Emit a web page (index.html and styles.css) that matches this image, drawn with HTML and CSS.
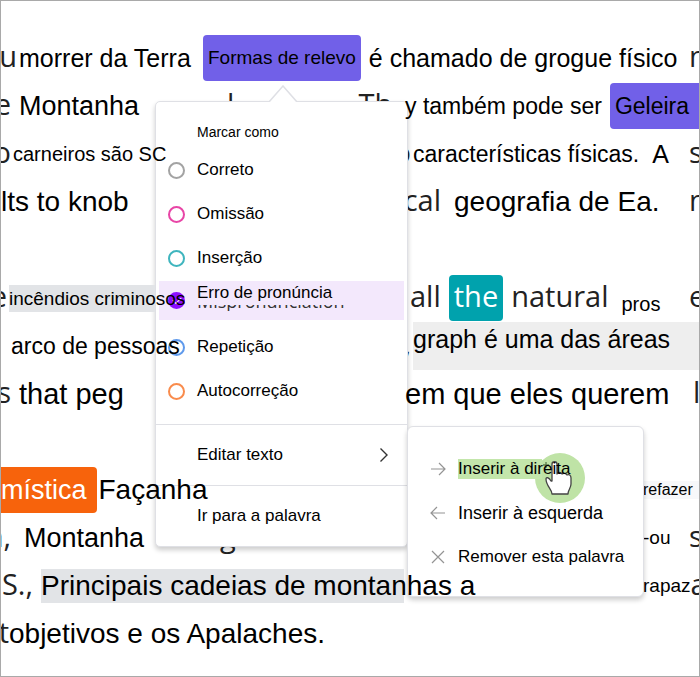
FILE: index.html
```html
<!DOCTYPE html>
<html lang="pt-BR">
<head>
  <meta charset="UTF-8" />
  <meta name="viewport" content="width=device-width, initial-scale=1.0"/>
  <title>Formas de relevo</title>
  <link rel="stylesheet" href="styles.css">
</head>
<body>
  <main class="passage">
    <div class="row">
      <div class="lead">
        <span class="edge full source">u</span>
        <span class="text-m">morrer da Terra</span>
      </div>
      <div class="anchor">
        <button class="chip mispronounced text-xs">Formas de relevo</button>

        <!-- Word menu -->
        <div class="menu">
          <svg class="caret" width="28" height="17" viewBox="0 0 28 17">
            <path d="M0 17 L14 1 L28 17" fill="#fff" stroke="#dfe0e5" stroke-width="1.5"/>
          </svg>
          <fieldset class="marks">
            <legend>Marcar como</legend>
            <label class="mark"><input type="radio" name="mark" class="gray">Correto</label>
            <label class="mark"><input type="radio" name="mark" class="pink">Omissão</label>
            <label class="mark"><input type="radio" name="mark" class="teal">Inserção</label>
            <label class="mark selected">
              <input type="radio" name="mark" class="purple" checked>
              <span class="stacked">Erro de pronúncia<span class="remnant">Mispronunciation</span></span>
            </label>
            <label class="mark"><input type="radio" name="mark" class="blue">Repetição</label>
            <label class="mark"><input type="radio" name="mark" class="orange">Autocorreção</label>
          </fieldset>
          <button class="menu-item">
            Editar texto
            <svg width="10" height="16" viewBox="0 0 10 16" fill="none" stroke="#333" stroke-width="1.4">
              <path d="M1.5 1.5 L8 8 L1.5 14.5"/>
            </svg>
          </button>
          <button class="menu-item">Ir para a palavra</button>

          <!-- Edit submenu -->
          <div class="submenu">
            <button class="sub-item">
              <svg width="16" height="16" viewBox="0 0 16 16" fill="none" stroke="#949494" stroke-width="1.2">
                <path d="M1 8 H15 M9 2 L15 8 L9 14"/>
              </svg>
              <span class="hovered">Inserir à direita</span>
            </button>
            <button class="sub-item strong">
              <svg width="16" height="16" viewBox="0 0 16 16" fill="none" stroke="#949494" stroke-width="1.2">
                <path d="M15 8 H1 M7 2 L1 8 L7 14"/>
              </svg>
              <span>Inserir à esquerda</span>
            </button>
            <button class="sub-item">
              <svg width="16" height="16" viewBox="0 0 16 16" fill="none" stroke="#949494" stroke-width="1.2">
                <path d="M2 2 L14 14 M14 2 L2 14"/>
              </svg>
              <span>Remover esta palavra</span>
            </button>
            <svg class="pointer" width="50" height="50" viewBox="0 0 50 50">
              <circle cx="25" cy="25" r="25" fill="#bfe3a6"/>
              <path d="M17 41 C17 36 11 33 11 26 C11 24 14 24 16 28 L17 28 V11 C17 8 22 8 22 11 V21 C23 19 26 19 27 21 C28 20 31 20 32 22 C34 21 36 22 36 25 V31 C36 35 33 37 33 41 Z" fill="#fff" stroke="#444" stroke-width="1.3" stroke-linejoin="round"/>
              <path d="M11 9 V15 M8 12 H14" fill="none" stroke="#5b7a4a" stroke-width="1.3"/>
            </svg>
          </div>
        </div>
      </div>
      <span class="text-m">é chamado de grogue físico</span>
      <span class="edge-right source">n</span>
    </div>

    <div class="row">
      <div class="left">
        <span class="edge source">e</span>
        <span class="text-l">Montanha</span>
        <span class="beneath far source">l</span>
        <span class="beneath farther source">Th</span>
      </div>
      <span class="text-s over">y também pode ser</span>
      <button class="chip mispronounced cut-right text-s">Geleira</button>
    </div>

    <div class="row">
      <div class="left tight">
        <span class="edge source">o</span>
        <span class="text-sm over">carneiros são SC</span>
      </div>
      <div class="right">
        <span class="edge sliver source">o</span>
        <span class="text-s">características físicas.</span>
      </div>
      <span class="text-m spaced">A</span>
      <span class="edge-right source">s</span>
    </div>

    <div class="row">
      <div class="left"><span class="text-xl">lts to knob</span></div>
      <span class="edge wide source">cal</span>
      <span class="text-xl spaced">geografia de Ea.</span>
      <span class="edge-right source">n</span>
    </div>

    <div class="row new-paragraph">
      <div class="left tight">
        <span class="edge sliver source">e</span>
        <mark class="pause short text-xs over">incêndios criminosos</mark>
      </div>
      <span class="source spaced">all</span>
      <button class="chip insertion source">the</button>
      <span class="source">natural</span>
      <span class="text-sm low spaced">pros</span>
      <span class="edge-right source">e</span>
    </div>

    <div class="row">
      <div class="left tight">
        <span class="edge narrow"></span>
        <span class="text-s over">arco de pessoas</span>
      </div>
      <div class="right">
        <span class="edge sliver source">,</span>
        <mark class="pause fill text-m">graph é uma das áreas</mark>
      </div>
    </div>

    <div class="row">
      <div class="left">
        <span class="edge source">s</span>
        <span class="text-xxl">that peg</span>
      </div>
      <span class="text-xxl over">em que eles querem</span>
      <span class="edge-right thin source">l</span>
    </div>

    <div class="row new-paragraph">
      <div class="left tight">
        <button class="chip self-correction text-l">mística</button>
        <span class="text-xl over">Façanha</span>
      </div>
      <div class="tail"><span class="redo">refazer</span></div>
    </div>

    <div class="row">
      <div class="left">
        <span class="edge source">n,</span>
        <span class="text-l spaced">Montanha</span>
        <span class="beneath near source">g</span>
      </div>
      <div class="tail">
        <span class="text-xs">-ou</span>
        <span class="edge-right source">s</span>
      </div>
    </div>

    <div class="row">
      <div class="left">
        <span class="edge medium source">S.,</span>
        <mark class="pause long text-xl over">Principais cadeias de montanhas a</mark>
      </div>
      <div class="tail over">
        <span class="text-xs">rapaz</span>
        <span class="edge-right source">a</span>
      </div>
    </div>

    <div class="row tight">
      <span class="edge narrow source">t</span>
      <span class="text-xl">objetivos e os Apalaches.</span>
    </div>
  </main>
</body>
</html>
```
FILE: styles.css
```css
* {
  box-sizing: border-box;
}

body {
  margin: 0;
  font-family: "Liberation Sans", Arial, sans-serif;
  background: #fff;
  color: #000;
}

button {
  font-family: inherit;
  color: inherit;
  border: none;
  background: none;
  padding: 0;
  cursor: pointer;
}

.passage {
  min-height: 100vh;
  border: 1px solid #a9a9a9;
  padding-top: 33px;
  overflow: hidden;
}

.row {
  display: flex;
  align-items: center;
  gap: 8px;
  height: 48px;
  white-space: nowrap;
}

.row.new-paragraph {
  margin-top: 48px;
}

.row.tight {
  gap: 0;
}

.left {
  display: flex;
  align-items: center;
  flex: none;
  gap: 8px;
  width: 396px;
  height: 48px;
}

.left.tight {
  gap: 2px;
}

.lead {
  display: flex;
  align-items: center;
  flex: none;
  gap: 2px;
  width: 194px;
}

.right {
  display: flex;
  align-items: center;
  flex: 0 1 auto;
  gap: 2px;
}

.right:last-child {
  flex: 1;
}

.tail {
  display: flex;
  align-items: center;
  width: 56px;
  margin-left: auto;
}

/* Text sizes */
.text-xs {
  font-size: 19px;
}

.text-sm {
  font-size: 20px;
}

.text-s {
  font-size: 23px;
}

.text-m {
  font-size: 25px;
}

.text-l {
  font-size: 27px;
}

.text-xl {
  font-size: 28px;
}

.text-xxl {
  font-size: 29px;
}

.source {
  padding-bottom: 5px;
  font-family: "Open Sans", "Noto Sans", sans-serif;
  font-size: 29px;
  color: #222;
}

.spaced {
  margin-left: 5px;
}

/* Letters cut off by the sides of the passage */
.edge {
  display: flex;
  justify-content: flex-end;
  flex: none;
  width: 10px;
  overflow: hidden;
}

.edge.full {
  width: 16px;
}

.edge.narrow {
  width: 8px;
}

.edge.sliver {
  width: 6px;
}

.edge.medium {
  width: 32px;
}

.edge.wide {
  width: 36px;
}

.edge-right {
  width: 10px;
  margin-left: auto;
  overflow: hidden;
}

.edge-right.thin {
  width: 6px;
}

/* Words above and below the menu */
.over {
  position: relative;
  z-index: 3;
}

.beneath.near {
  margin-left: 68px;
}

.beneath.far {
  margin-left: 80px;
}

.beneath.farther {
  margin-left: 116px;
}

.low {
  padding-top: 12px;
}

/* Marked words */
.chip {
  flex: none;
  height: 46px;
  padding: 0 5px;
  border-radius: 4px;
}

.chip.mispronounced {
  background: #7160e8;
}

.chip.insertion {
  padding-bottom: 5px;
  background: #00a2ad;
  color: #fff;
}

.chip.self-correction {
  background: #f7630c;
  color: #fff;
  padding: 0 10px 0 0;
  border-radius: 0 4px 4px 0;
}

.chip.cut-right {
  flex: 1;
  text-align: left;
  border-radius: 4px 0 0 4px;
}

.pause {
  background: #e2e4e7;
  color: #000;
  line-height: 34px;
}

.pause.short {
  width: 146px;
  line-height: 27px;
}

.pause.long {
  width: 363px;
}

.pause.fill {
  flex: 1;
  height: 48px;
  background: #eee;
}

.redo {
  flex: 1;
  font-size: 16px;
  background: #f7f8fa;
}

/* Menu */
.anchor {
  position: relative;
  flex: none;
}

.menu {
  position: absolute;
  z-index: 2;
  top: 66px;
  left: -48px;
  width: 253px;
  background: #fff;
  border: 1px solid #dfe0e5;
  border-radius: 5px;
  box-shadow: 0 3px 5px rgba(0, 0, 0, 0.2);
  font-size: 17px;
}

.caret {
  position: absolute;
  top: -17px;
  left: 113px;
}

.marks {
  margin: 0;
  padding: 0 3px 11px;
  border: none;
}

.marks legend {
  padding: 21px 0 7px 38px;
  font-size: 14px;
  line-height: 18px;
}

.mark {
  display: flex;
  align-items: center;
  gap: 12px;
  height: 44px;
  padding-left: 9px;
}

.mark.selected {
  height: 39px;
  margin: 1px 0 5px;
  background: #f3e8fc;
}

.mark input {
  appearance: none;
  flex: none;
  width: 17px;
  height: 17px;
  margin: 0;
  border: 2px solid;
  border-radius: 50%;
}

.gray {
  color: #a3a3a3;
}

.pink {
  color: #e845a6;
}

.teal {
  color: #3fb5be;
}

.blue {
  color: #5f9aec;
}

.orange {
  color: #f98b4c;
}

.purple {
  color: #8c0fff;
  background: #8c0fff;
}

.purple::before {
  content: "";
  display: block;
  width: 7px;
  height: 4px;
  margin: 3px;
  border-left: 1px solid #fff;
  border-bottom: 1px solid #fff;
  transform: rotate(-45deg);
}

.stacked {
  align-self: flex-start;
  line-height: 24px;
}

.remnant {
  display: flex;
  align-items: flex-end;
  height: 6px;
  overflow: hidden;
  font-family: "Open Sans", "Noto Sans", sans-serif;
  font-size: 18px;
  line-height: 20px;
  color: #333;
}

.menu-item {
  display: flex;
  align-items: center;
  justify-content: space-between;
  width: 100%;
  height: 61px;
  padding: 0 18px 0 41px;
  border-top: 1px solid #dfe0e5;
  font-size: 17px;
}

.submenu {
  position: absolute;
  top: 324px;
  left: 251px;
  width: 237px;
  padding: 20px 0 17px;
  background: #fff;
  border: 1px solid #dfe0e5;
  border-radius: 6px;
  box-shadow: 0 3px 5px rgba(0, 0, 0, 0.2);
}

.sub-item {
  display: flex;
  align-items: center;
  gap: 12px;
  width: 100%;
  height: 44px;
  padding-left: 22px;
  font-size: 17px;
}

.sub-item.strong {
  font-size: 18px;
}

/* The label runs past its highlight and over the pointer */
.hovered {
  position: relative;
  z-index: 1;
  width: 84px;
  background: #c3e6ab;
  text-align: left;
  white-space: nowrap;
}

.pointer {
  position: absolute;
  top: 26px;
  left: 127px;
  pointer-events: none;
}
```
